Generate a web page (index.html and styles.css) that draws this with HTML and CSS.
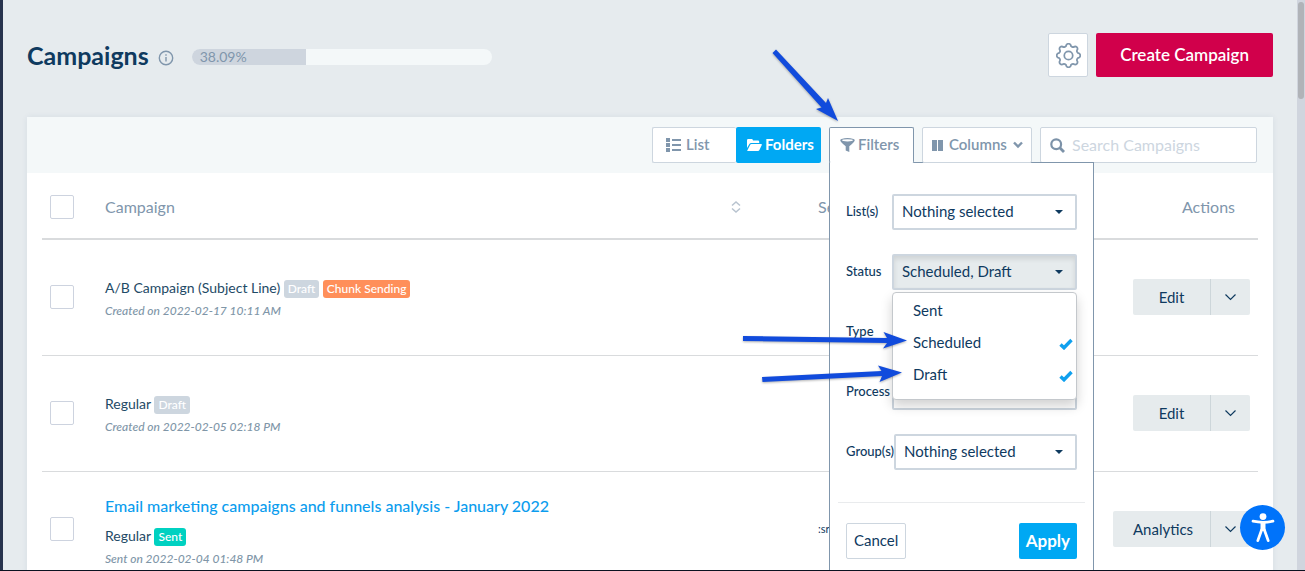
FILE: index.html
```html
<!DOCTYPE html>
<html lang="en">
<head>
    <meta charset="UTF-8">
    <meta name="viewport" content="width=device-width, initial-scale=1.0">
    <title>Campaigns</title>
    <link rel="stylesheet" href="styles.css">
</head>
<body>
    <div class="sidebar"></div>

    <main class="page">
        <header class="page-header">
            <h1 class="page-title">Campaigns</h1>
            <svg class="info-icon" viewBox="0 0 16 16" fill="none" stroke="currentColor"><circle cx="8" cy="8" r="6.7" stroke-width="1.4"/><path d="M8 7v4.5M8 4.3v1.4" stroke-width="1.4"/></svg>
            <div class="quota"><div class="quota-bar" style="width: 38.09%">38.09%</div></div>
            <button class="settings-btn" aria-label="Settings">
                <svg viewBox="-1 -1 26 26" fill="none" stroke="currentColor" stroke-width="1.8" stroke-linejoin="round">
                    <path d="M9.84.91A2.6 2.6 0 0 1 14.16.91A2.5 2.5 0 0 0 18.32 2.63A2.6 2.6 0 0 1 21.37 5.68A2.5 2.5 0 0 0 23.09 9.84A2.6 2.6 0 0 1 23.09 14.16A2.5 2.5 0 0 0 21.37 18.32A2.6 2.6 0 0 1 18.32 21.37A2.5 2.5 0 0 0 14.16 23.09A2.6 2.6 0 0 1 9.84 23.09A2.5 2.5 0 0 0 5.68 21.37A2.6 2.6 0 0 1 2.63 18.32A2.5 2.5 0 0 0 .91 14.16A2.6 2.6 0 0 1 .91 9.84A2.5 2.5 0 0 0 2.63 5.68A2.6 2.6 0 0 1 5.68 2.63A2.5 2.5 0 0 0 9.84.91Z"/>
                    <circle cx="12" cy="12" r="4.4"/>
                </svg>
            </button>
            <button class="create-btn">Create Campaign</button>
        </header>

        <section class="card">
            <div class="toolbar">
                <div class="view-switch">
                    <button class="tool-btn list-btn">
                        <svg class="icon-list" viewBox="0 0 15 14" fill="currentColor"><path d="M0 0h4v4H0zM0 5h4v4H0zM0 10h4v4H0zM6 1h9v2H6zM6 6h9v2H6zM6 11h9v2H6z"/></svg>
                        List
                    </button>
                    <button class="tool-btn folders-btn">
                        <svg class="icon-folder" viewBox="0 0 15 12" fill="currentColor"><path d="M0 9V1.2Q0 0 1.2 0H4.8Q6 0 6 1.5H11Q12.2 1.5 12.2 2.8V4H4.2Q3 4 2.4 5ZM.3 11.4L3.2 5.8Q3.6 5 4.5 5H14.2Q15.2 5 14.8 5.9L12.4 11Q12 12 11 12H.8Q0 12 .3 11.4Z"/></svg>
                        Folders
                    </button>
                </div>

                <div class="filters">
                    <button class="tool-btn filters-btn">
                        <svg class="icon-filter" viewBox="0 0 15 14"><path d="M.3 2.5Q0 1.6 1.5 1Q7.5-1 13.5 1Q15 1.6 14.7 2.5Q14 4.6 9.3 8.2V14L5.7 12.6V8.2Q1 4.6 .3 2.5Z" fill="currentColor"/><ellipse cx="7.5" cy="2.3" rx="5.4" ry="1.1" fill="#fff"/></svg>
                        Filters
                    </button>
                    <form class="filter-panel">
                        <div class="filter-row">
                            <label for="lists">List(s)</label>
                            <div class="select-box"><select id="lists"><option>Nothing selected</option></select></div>
                        </div>
                        <div class="filter-row">
                            <label for="status">Status</label>
                            <div class="select-box open">
                                <select id="status"><option>Scheduled, Draft</option></select>
                                <ul class="select-menu">
                                    <li>Sent</li>
                                    <li>Scheduled <svg viewBox="0 0 14 12"><path d="M1.5 6.5L5 9.8L12.5 2" fill="none" stroke="currentColor" stroke-width="3.4"/></svg></li>
                                    <li>Draft <svg viewBox="0 0 14 12"><path d="M1.5 6.5L5 9.8L12.5 2" fill="none" stroke="currentColor" stroke-width="3.4"/></svg></li>
                                </ul>
                            </div>
                        </div>
                        <div class="filter-row">
                            <label for="type">Type</label>
                            <div class="select-box"><select id="type"></select></div>
                        </div>
                        <div class="filter-row">
                            <label for="process">Process</label>
                            <div class="select-box"><select id="process"></select></div>
                        </div>
                        <div class="filter-row">
                            <label for="groups">Group(s)</label>
                            <div class="select-box"><select id="groups"><option>Nothing selected</option></select></div>
                        </div>
                        <div class="filter-actions">
                            <button type="button" class="cancel-btn">Cancel</button>
                            <button type="button" class="apply-btn">Apply</button>
                        </div>
                    </form>
                </div>

                <button class="tool-btn columns-btn">
                    <svg class="icon-columns" viewBox="0 0 11 11" fill="currentColor"><path d="M0 0h5v11H0zM6 0h5v11H6z"/></svg>
                    Columns
                    <svg class="icon-chevron" viewBox="0 0 10 8" fill="none" stroke="currentColor" stroke-width="2.4"><path d="M1 1.5L5 5.5L9 1.5"/></svg>
                </button>

                <label class="search">
                    <svg class="icon-search" viewBox="0 0 15 15" fill="none" stroke="currentColor"><circle cx="6.2" cy="6.2" r="4.9" stroke-width="2.2"/><path d="M9.8 9.8L14 14" stroke-width="2.8"/></svg>
                    <input type="text" placeholder="Search Campaigns" aria-label="Search Campaigns">
                </label>
            </div>

            <table class="campaigns">
                <thead>
                    <tr>
                        <th class="col-check"><input type="checkbox" aria-label="Select all"></th>
                        <th class="col-name">
                            <div class="sortable">Campaign
                                <svg viewBox="0 0 10 12" fill="none" stroke="currentColor" stroke-width="1.5"><path d="M1 4.5L5 1L9 4.5M1 7.5L5 11L9 7.5"/></svg>
                            </div>
                        </th>
                        <th class="col-sent">Sent</th>
                        <th class="col-actions">Actions</th>
                    </tr>
                </thead>
                <tbody>
                    <tr>
                        <td><input type="checkbox" aria-label="Select A/B Campaign"></td>
                        <td class="info">
                            <div class="kind">A/B Campaign (Subject Line) <span class="badge">Draft</span> <span class="badge chunk">Chunk Sending</span></div>
                            <div class="date">Created on 2022-02-17 10:11 AM</div>
                        </td>
                        <td></td>
                        <td>
                            <div class="split-btn">
                                <button>Edit</button>
                                <button class="more" aria-label="More"><svg viewBox="0 0 12 8" fill="none" stroke="currentColor" stroke-width="1.2"><path d="M1 1.5L6 6.5L11 1.5"/></svg></button>
                            </div>
                        </td>
                    </tr>
                    <tr>
                        <td><input type="checkbox" aria-label="Select Regular"></td>
                        <td class="info">
                            <div class="kind">Regular <span class="badge">Draft</span></div>
                            <div class="date">Created on 2022-02-05 02:18 PM</div>
                        </td>
                        <td></td>
                        <td>
                            <div class="split-btn">
                                <button>Edit</button>
                                <button class="more" aria-label="More"><svg viewBox="0 0 12 8" fill="none" stroke="currentColor" stroke-width="1.2"><path d="M1 1.5L6 6.5L11 1.5"/></svg></button>
                            </div>
                        </td>
                    </tr>
                    <tr>
                        <td><input type="checkbox" aria-label="Select Email marketing campaigns"></td>
                        <td class="info">
                            <a class="name" href="#">Email marketing campaigns and funnels analysis - January 2022</a>
                            <div class="kind">Regular <span class="badge sent">Sent</span></div>
                            <div class="date">Sent on 2022-02-04 01:48 PM</div>
                        </td>
                        <td class="stat">:sr</td>
                        <td>
                            <div class="split-btn">
                                <button>Analytics</button>
                                <button class="more" aria-label="More"><svg viewBox="0 0 12 8" fill="none" stroke="currentColor" stroke-width="1.2"><path d="M1 1.5L6 6.5L11 1.5"/></svg></button>
                            </div>
                        </td>
                    </tr>
                </tbody>
            </table>
        </section>
    </main>

    <div class="scrollbar"><div class="thumb"></div></div>

    <button class="access-btn" aria-label="Accessibility">
        <svg viewBox="0 0 24 30"><circle cx="12" cy="3.6" r="3.4" fill="#fff"/><path d="M2 8.2Q12 10.4 22 8.2" fill="none" stroke="#fff" stroke-width="2.8" stroke-linecap="round"/><path d="M9.5 9h5v9h-5z" fill="#fff"/><path d="M10.6 17L6.8 27.6M13.4 17L17.2 27.6" stroke="#fff" stroke-width="2.8" stroke-linecap="round"/></svg>
    </button>

    <!-- pointer arrows -->
    <svg class="arrows" width="1305" height="571" viewBox="0 0 1305 571" fill="#114bdc">
        <path d="M776 49.5L772.5 53L821.5 107.5L816 109L838 121L828 98L826 103Z"/>
        <path d="M743 336L743 341L887 343L883 348.5L907 340.5L883.5 332L887 338Z"/>
        <path d="M762 377L762.5 382L882 376L879.5 382L902 372.5L878 365.5L881.5 371Z"/>
    </svg>
</body>
</html>
```
FILE: styles.css
```css
* { box-sizing: border-box; }
body { margin: 0; height: 100vh; overflow: hidden; display: flex; position: relative; font-family: Lato, "Liberation Sans", sans-serif; font-size: 15px; color: #0f3a5f; background: #e6ebee; border-bottom: 1px solid #0b1220; }
button, input, select { font-family: inherit; font-size: inherit; color: inherit; }
button { cursor: pointer; padding: 0; }

.sidebar { width: 3px; background: #27334d; }
.page { flex: 1; padding: 33px 24px 0; min-width: 0; }
.scrollbar { width: 8px; padding: 2px 1px; background: #d0d5de; }
.thumb { height: 97px; border-radius: 3px; background: #b0b3b8; }

/* header */
.page-header { display: flex; align-items: center; height: 44px; margin-bottom: 40px; }
.page-title { margin: 0; font-size: 25px; font-weight: 700; line-height: 46px; }
.info-icon { width: 16px; height: 16px; margin: 6px 18px 0 9px; color: #8096ac; }
.quota { width: 300px; height: 16px; margin: 4px auto 0 0; border-radius: 8px; overflow: hidden; background: #f4f8f9; }
.quota-bar { height: 16px; padding-left: 8px; font-size: 14px; line-height: 16px; color: #8096ac; background: #ced5de; }
.settings-btn { width: 40px; height: 44px; margin-right: 8px; display: flex; align-items: center; justify-content: center; color: #8096ac; background: #fff; border: 1px solid #cdd6df; border-radius: 2px; }
.settings-btn svg { width: 25px; height: 25px; }
.create-btn { height: 44px; padding: 0 24px 2px; border: none; border-radius: 2px; font-size: 17px; font-weight: 600; color: #fff; background: #d1004b; }

/* toolbar */
.card { background: #fff; border-radius: 2px; box-shadow: 0 0 6px rgba(40, 70, 110, 0.08); }
.toolbar { display: flex; justify-content: flex-end; gap: 8px; height: 56px; padding: 10px 16px; background: #f4f8f9; }
.tool-btn { display: flex; align-items: center; height: 36px; padding-bottom: 2px; font-weight: 600; color: #8096ac; background: #fff; border: 1px solid #cdd6df; border-radius: 2px; }
.tool-btn svg { margin-top: 2px; }
.view-switch { display: flex; }
.list-btn { width: 84px; padding-left: 13px; gap: 5px; border-right: none; }
.folders-btn { width: 85px; padding-left: 11px; gap: 3px; color: #fff; background: #00a8f3; border: none; font-weight: 700; }
.filters { position: relative; }
.filters-btn { position: relative; z-index: 3; width: 85px; padding-left: 10px; gap: 3px; border-color: #8096ac; border-bottom-color: #fff; }
.columns-btn { position: relative; z-index: 3; width: 110px; padding-left: 9px; gap: 6px; }
.search { display: flex; align-items: center; width: 217px; height: 36px; padding-left: 9px; gap: 7px; color: #7c92a8; background: #fff; border: 1px solid #cdd6df; border-radius: 2px; }
.search input { flex: 1; min-width: 0; padding: 0 0 2px; border: none; outline: none; font-size: 16px; background: none; }
.search input::placeholder { color: #cdd6df; }
.icon-list { width: 15px; height: 14px; }
.icon-folder { width: 15px; height: 12px; }
.icon-filter { width: 15px; height: 14px; }
.icon-columns { width: 11px; height: 11px; }
.icon-chevron { width: 10px; height: 8px; }
.icon-search { width: 15px; height: 15px; }

/* filter panel */
.filter-panel { position: absolute; z-index: 2; top: 35px; left: 0; width: 265px; height: 420px; padding: 31px 16px 0; background: #fff; border: 1px solid #8096ac; }
.filter-row { display: flex; height: 36px; margin-bottom: 24px; }
.filter-row label { min-width: 46px; font-size: 13px; font-weight: 500; line-height: 34px; white-space: nowrap; }
.select-box { position: relative; flex: 1; min-width: 0; }
.select-box::after { content: ""; position: absolute; top: 16px; right: 14px; border: 4px solid transparent; border-top-color: #0f3a5f; border-bottom: none; }
.select-box select { appearance: none; display: block; width: 100%; height: 36px; padding: 0 8px 2px; background: #fff; border: 2px solid #cdd6df; border-radius: 2px; outline: none; }
.open select { background: #e6ebed; box-shadow: inset 0 3px 5px rgba(0, 0, 0, 0.1); }
.select-menu { position: absolute; z-index: 4; top: 38px; left: 0; right: 0; margin: 0; padding: 1px 0 9px; list-style: none; background: #fff; border: 1px solid #c4c8cc; border-radius: 4px; box-shadow: 0 6px 12px rgba(0, 0, 0, 0.18); }
.select-menu li { display: flex; align-items: center; justify-content: space-between; height: 32px; padding: 0 3px 0 20px; }
.select-menu svg { width: 14px; height: 12px; margin-top: 3px; color: #0fa0ee; }
.filter-actions { display: flex; justify-content: space-between; margin: 32px -8px 0; padding: 20px 8px 0; border-top: 1px solid #e9ebed; }
.cancel-btn { height: 36px; padding: 0 7px 2px; background: #fff; border: 1px solid #cdd6df; border-radius: 2px; }
.apply-btn { height: 36px; padding: 0 7px 2px; font-size: 17px; font-weight: 700; color: #fff; background: #00a8f3; border: none; border-radius: 2px; }

/* table */
.campaigns { width: calc(100% - 30px); margin: 0 15px; table-layout: fixed; border-collapse: separate; border-spacing: 0; }
.campaigns th { height: 67px; padding: 2px 0 0; font-size: 16px; font-weight: 400; text-align: left; color: #8096ac; border-bottom: 2px solid #d9dbdd; }
.campaigns td { height: 116px; padding: 0 0 2px; border-bottom: 1px solid #d9dbdd; }
.campaigns .info { padding: 2px 0 0; }
.campaigns .col-check { width: 63px; }
.campaigns .col-sent { width: 295px; }
.campaigns .col-actions { width: 145px; padding-right: 23px; text-align: right; }
.campaigns input { appearance: none; display: block; width: 24px; height: 24px; margin: 0 0 0 8px; background: #fff; border: 1px solid #cdd3df; border-radius: 2px; }
.sortable { display: flex; align-items: center; justify-content: space-between; padding-right: 77px; }
.sortable svg { width: 10px; height: 12px; color: #b8c3cf; }
.name { display: block; margin-bottom: 3px; font-size: 16px; font-weight: 500; line-height: 30px; color: #0c9dee; text-decoration: none; }
.kind { font-size: 14px; line-height: 23px; color: #1e4a66; }
.date { font-size: 12px; line-height: 23px; font-style: italic; font-weight: 500; color: #8096a8; }
.badge { display: inline-block; padding: 0 4px; font-size: 12px; font-weight: 500; line-height: 18px; color: #fff; background: #cdd6df; border-radius: 3px; }
.chunk { background: #ff8f5a; }
.sent { background: #00d1c1; }
.stat { font-size: 11px; }
.split-btn { display: flex; justify-content: flex-end; padding-right: 8px; }
.split-btn button { height: 36px; padding: 0 20px; min-width: 77px; background: #e6ebed; border: none; border-radius: 2px 0 0 2px; }
.split-btn .more { min-width: 40px; padding: 0 13px; border-left: 1px solid #cdd6da; border-radius: 0 2px 2px 0; }
.more svg { display: block; width: 13px; height: 8px; }

/* floating */
.access-btn { position: absolute; z-index: 5; right: 20px; bottom: 20px; width: 45px; height: 45px; display: flex; align-items: center; justify-content: center; background: #0073fa; border: none; border-radius: 50%; }
.access-btn svg { width: 24px; height: 30px; }
.arrows { position: absolute; z-index: 6; top: 0; left: 0; pointer-events: none; filter: drop-shadow(0 1px 1px rgba(0, 0, 0, 0.3)); }
```
